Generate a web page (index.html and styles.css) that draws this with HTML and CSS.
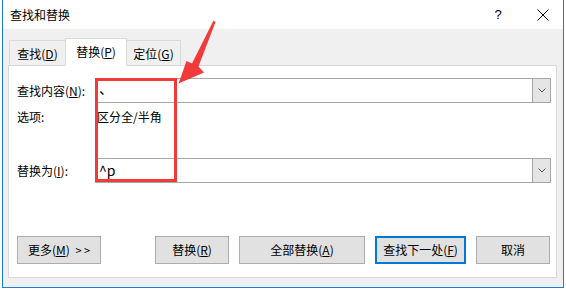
FILE: index.html
```html
<!DOCTYPE html>
<html lang="zh-CN">
<head>
<meta charset="utf-8">
<title>查找和替换</title>
<link rel="stylesheet" href="styles.css">
</head>
<body>
<div class="window">
  <div class="titlebar">
    <span class="title">查找和替换</span>
    <span class="tb-btn help">?</span>
    <span class="tb-btn close">
      <svg width="12" height="12" viewBox="0 0 12 12"><path d="M0.5 0.5 L11.5 11.5 M11.5 0.5 L0.5 11.5" stroke="#000" stroke-width="1" fill="none"/></svg>
    </span>
  </div>
  <div class="body">
    <div class="tabs">
      <div class="tab t1">查找(<u>D</u>)</div>
      <div class="tab active">替换(<u>P</u>)</div>
      <div class="tab t3">定位(<u>G</u>)</div>
    </div>
    <div class="panel">
      <div class="form">
        <label class="lbl">查找内容(<u>N</u>):</label>
        <div class="combo">
          <span class="val dun">、</span>
          <span class="drop"><svg width="8" height="5" viewBox="0 0 8 5"><path d="M0.5 0.5 L4 4 L7.5 0.5" stroke="#555" stroke-width="1" fill="none"/></svg></span>
        </div>
        <span class="lbl top">选项:</span>
        <span class="opt top">区分全/半角</span>
        <label class="lbl">替换为(<u>I</u>):</label>
        <div class="combo">
          <span class="val">^p</span>
          <span class="drop"><svg width="8" height="5" viewBox="0 0 8 5"><path d="M0.5 0.5 L4 4 L7.5 0.5" stroke="#555" stroke-width="1" fill="none"/></svg></span>
        </div>
      </div>
      <div class="buttons">
        <button class="btn more">更多(<u>M</u>) <span class="gt">&gt; &gt;</span></button>
        <div class="actions">
          <button class="btn w74">替换(<u>R</u>)</button>
          <button class="btn w126">全部替换(<u>A</u>)</button>
          <button class="btn w91 default">查找下一处(<u>F</u>)</button>
          <button class="btn w74">取消</button>
        </div>
      </div>
    </div>
  </div>
  <div class="mark-box"></div>
  <svg class="arrow" width="566" height="290" viewBox="0 0 566 290">
    <polygon points="212.5,20.5 214.5,22 197.5,66.5 203,72.5 177.5,83.5 185.5,61 191,63.5" fill="#f23a3a"/>
  </svg>
</div>
</body>
</html>
```

FILE: styles.css
```css
* {
  box-sizing: border-box;
}

html,
body {
  margin: 0;
  padding: 0;
  background: #ffffff;
}

body {
  font-family: "Noto Sans CJK SC", "Microsoft YaHei", sans-serif;
  font-size: 12px;
  color: #000;
}

.window {
  position: relative;
  margin-left: 2px;
  width: 562px;
  height: 288px;
  border: 1px solid #1a7fd4;
  border-top: none;
  background: #f0f0f0;
  display: flex;
  flex-direction: column;
}

.titlebar {
  flex: none;
  height: 29px;
  background: #ffffff;
  display: flex;
  align-items: center;
  padding-left: 7px;
}

.title {
  flex: 1;
  line-height: 16px;
}

.tb-btn {
  width: 40px;
  height: 29px;
  display: flex;
  align-items: center;
  justify-content: center;
}

.help {
  margin-right: 5px;
  font-family: "Liberation Sans", sans-serif;
  font-size: 13px;
}

.body {
  flex: 1;
  padding: 9px 6px 9px 5px;
  display: flex;
  flex-direction: column;
}

.tabs {
  display: flex;
  align-items: flex-end;
  height: 28px;
  margin-bottom: -1px;
  padding-left: 1px;
  position: relative;
  z-index: 1;
}

.tab {
  height: 25px;
  margin-bottom: 1px;
  border: 1px solid #d9d9d9;
  border-bottom: none;
  display: flex;
  align-items: center;
  justify-content: center;
  line-height: 16px;
  padding-top: 2px;
  background: #f0f0f0;
}

.t1 {
  width: 57px;
}

.t3 {
  width: 55px;
  margin-left: -1px;
}

.tab.active {
  width: 62px;
  height: 28px;
  margin-bottom: 0;
  margin-left: -1px;
  padding-top: 0;
  padding-bottom: 1px;
  background: #ffffff;
}

.panel {
  height: 213px;
  background: #ffffff;
  border: 1px solid #d9d9d9;
  display: flex;
  flex-direction: column;
}

.form {
  display: grid;
  grid-template-columns: 78px 1fr;
  grid-template-rows: 25px 55px 25px;
  padding: 12px 5px 0 8px;
}

.lbl {
  align-self: center;
  line-height: 16px;
  white-space: nowrap;
}

.top {
  align-self: start;
  margin-top: 6px;
  line-height: 16px;
}

.opt {
  padding-left: 2px;
}

.combo {
  display: flex;
  border: 1px solid #a5a5a5;
  background: #ffffff;
}

.val {
  flex: 1;
  padding-left: 3px;
  font-size: 14px;
  line-height: 22px;
}

.dun {
  line-height: 18px;
}

.drop {
  width: 18px;
  background: #e5e5e5;
  border-left: 1px solid #a5a5a5;
  display: flex;
  align-items: center;
  justify-content: center;
}

.buttons {
  display: flex;
  margin-top: 53px;
  padding: 0 6px 0 8px;
}

.btn {
  height: 28px;
  padding: 0;
  background: #e1e1e1;
  border: 1px solid #adadad;
  font: inherit;
  color: #000;
  line-height: 16px;
}

.more {
  width: 84px;
}

.gt {
  font-size: 11px;
  margin-left: 3px;
}

.actions {
  margin-left: auto;
  display: flex;
  gap: 10px;
}

.w74 {
  width: 74px;
}

.w126 {
  width: 126px;
}

.w91 {
  width: 91px;
}

.default {
  border: 2px solid #0078d7;
}

.mark-box {
  position: absolute;
  left: 92px;
  top: 78px;
  width: 82px;
  height: 104px;
  border: 3px solid #f23a3a;
}

.arrow {
  position: absolute;
  left: -2px;
  top: 0;
  pointer-events: none;
}
```
